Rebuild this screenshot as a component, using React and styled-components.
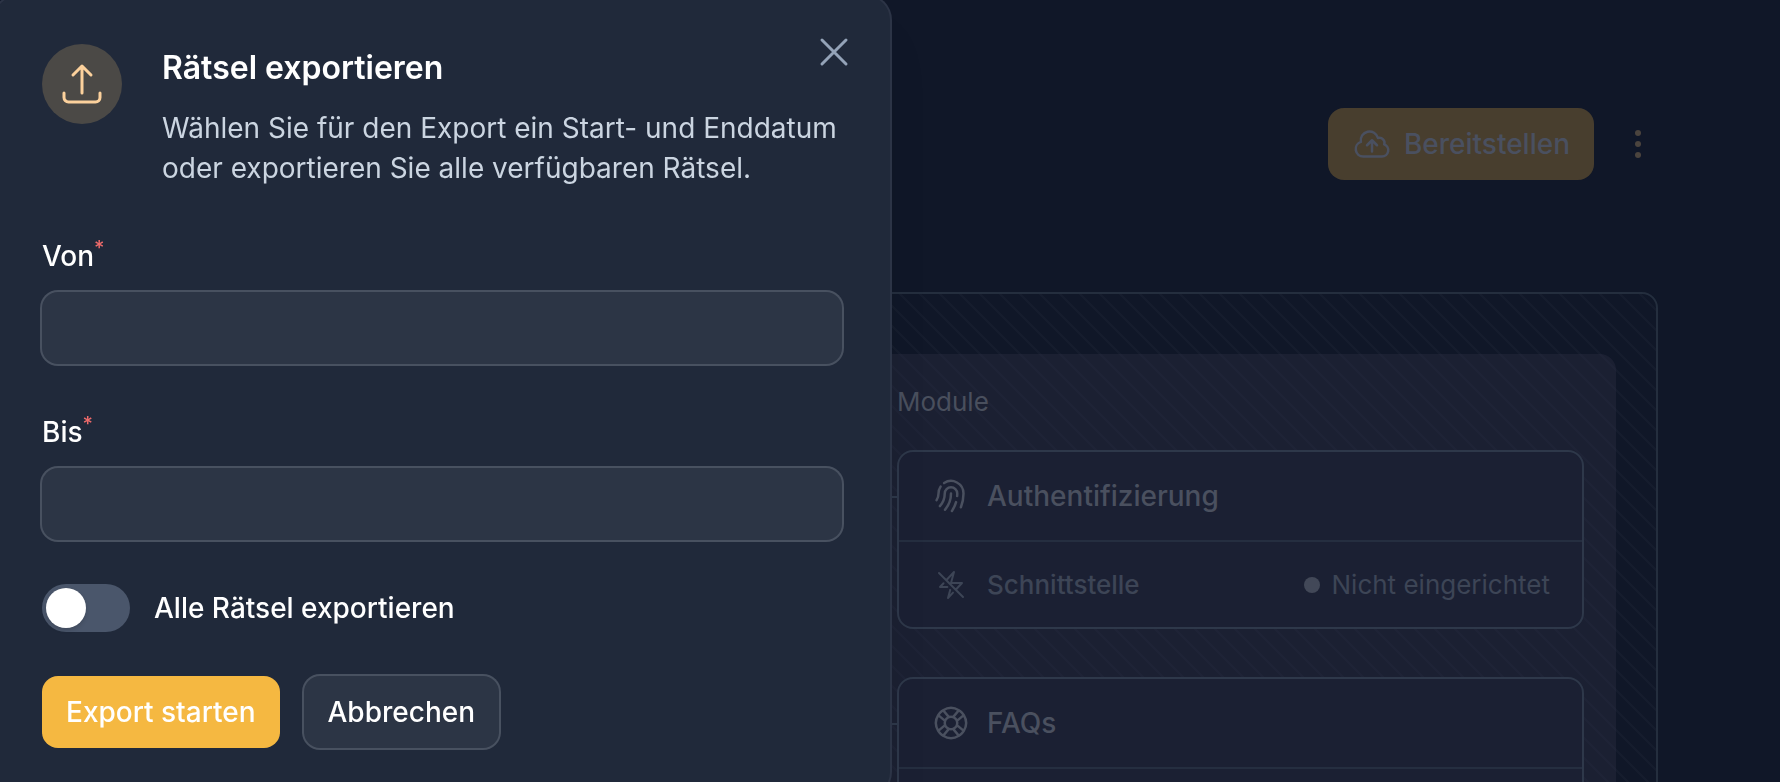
import React, { useState } from "react";
import styled, { createGlobalStyle } from "styled-components";
import {
  HiOutlineArrowUpTray,
  HiOutlineBoltSlash,
  HiOutlineCloudArrowUp,
  HiOutlineFingerPrint,
  HiOutlineLifebuoy,
  HiOutlineXMark,
} from "react-icons/hi2";

const GlobalStyle = createGlobalStyle`
  * {
    box-sizing: border-box;
  }

  body {
    margin: 0;
    overflow: hidden;
    background-color: #101728;
    color: #fff;
    font-family: Inter, "Liberation Sans", sans-serif;
    font-size: 28px;
    line-height: 40px;
    -webkit-font-smoothing: antialiased;
  }

  button, input {
    font: inherit;
    color: inherit;
    border: none;
    padding: 0;
  }

  button {
    cursor: pointer;
  }
`;

/* page */

const Page = styled.div`
  height: 100vh;
  overflow: hidden;
`;

const Container = styled.div`
  max-width: 1536px;
  margin: 0 auto;
  padding-top: 108px;
`;

const Header = styled.header`
  display: flex;
  align-items: center;
  justify-content: flex-end;
  gap: 24px;
  margin-bottom: 112px;
`;

const DeployButton = styled.button`
  display: flex;
  align-items: center;
  gap: 12px;
  padding: 16px 24px;
  border-radius: 16px;
  background-color: #483e2e;
  color: #4a5060;
  font-weight: 500;
`;

const MenuButton = styled.button`
  display: flex;
  background: none;
  color: #4b443e;
`;

const Canvas = styled.main`
  padding: 60px 40px;
  border: 2px solid #242e3e;
  border-radius: 16px;
  background-image: linear-gradient(
    45deg,
    #151c2d 4%,
    transparent 4%,
    transparent 46%,
    #151c2d 46%,
    #151c2d 54%,
    transparent 54%,
    transparent 96%,
    #151c2d 96%
  );
  background-size: 20px 20px;
  background-position: 16px 0;
`;

const Board = styled.div`
  display: grid;
  grid-template-columns: 1fr 1fr;
  column-gap: 14px;
  padding: 24px 32px;
  border-radius: 16px;
  background-color: rgba(53, 54, 77, 0.3);
`;

const ModuleColumn = styled.section`
  grid-column: 2;
  display: flex;
  flex-direction: column;
  gap: 48px;
`;

const ColumnTitle = styled.h2`
  margin: 4px 0 -20px;
  font-size: 26px;
  font-weight: 400;
  line-height: 40px;
  color: #494f5d;
`;

const ModuleCard = styled.article`
  position: relative;
  border: 2px solid #2e384a;
  border-radius: 16px;
  background-color: #1b2033;

  &::before {
    content: "";
    position: absolute;
    top: 44px;
    right: 100%;
    width: 16px;
    height: 2px;
    background-color: #2e384a;
  }
`;

const ModuleHeader = styled.div`
  display: flex;
  align-items: center;
  gap: 16px;
  padding: 24px 32px;
  border-bottom: 2px solid #252e40;
  color: #4a505f;
  font-weight: 500;
`;

const ModuleRow = styled.div`
  display: flex;
  align-items: center;
  gap: 16px;
  height: 85px;
  padding: 0 32px;
  color: #3d4556;
  font-size: 26px;
  font-weight: 500;
`;

const IconSlot = styled.span`
  display: flex;
  align-items: center;
  justify-content: center;
  width: 40px;
  height: 40px;
`;

const Status = styled.span`
  display: flex;
  align-items: center;
  gap: 12px;
  margin-left: auto;
  font-weight: 400;
`;

const StatusDot = styled.span`
  width: 16px;
  height: 16px;
  border-radius: 50%;
  background-color: #424858;
`;

/* dialog */

const DialogLayer = styled.div`
  position: fixed;
  inset: -4px 0 0 -6px;
`;

const Dialog = styled.form`
  position: relative;
  width: 100%;
  max-width: 896px;
  padding: 48px;
  border-radius: 24px;
  background-color: #20293a;
  box-shadow: 0 0 0 2px #2c3446, 0 40px 50px -10px rgba(0, 0, 0, 0.1);
`;

const CloseButton = styled.button`
  position: absolute;
  top: 32px;
  right: 32px;
  display: flex;
  background: none;
  color: #94a3b8;
`;

const Intro = styled.div`
  display: flex;
  gap: 40px;
  margin-bottom: 48px;
`;

const IntroIcon = styled.div`
  display: flex;
  align-items: center;
  justify-content: center;
  flex-shrink: 0;
  width: 80px;
  height: 80px;
  border-radius: 50%;
  background-color: #4b4946;
  color: #fcd19c;
`;

const Title = styled.h1`
  margin: 0 0 16px;
  font-size: 32px;
  font-weight: 600;
  line-height: 48px;
`;

const Description = styled.p`
  margin: 0;
  color: #cbd5e1;
`;

const Field = styled.div`
  margin-bottom: 48px;
`;

const Label = styled.label`
  display: flex;
  margin-bottom: 16px;
  font-weight: 500;
`;

const Required = styled.span`
  font-size: 20px;
  line-height: 24px;
  color: #ee6b6b;
`;

const TextInput = styled.input`
  display: block;
  width: 100%;
  height: 72px;
  padding: 0 24px;
  border-radius: 16px;
  background-color: #2c3545;
  box-shadow: 0 0 0 2px #485160;
  outline: none;
`;

const SwitchRow = styled.div`
  display: flex;
  align-items: center;
  gap: 24px;
  margin: -4px 0 44px;
  font-weight: 500;
`;

const Switch = styled.input`
  appearance: none;
  width: 88px;
  height: 48px;
  margin: 0;
  padding: 4px;
  border-radius: 24px;
  background-color: #4a566b;
  cursor: pointer;

  &::before {
    content: "";
    display: block;
    width: 40px;
    height: 40px;
    border-radius: 50%;
    background-color: #fff;
    box-shadow: 0 2px 4px rgba(0, 0, 0, 0.15);
  }

  &:checked {
    background-color: #f5b841;
  }

  &:checked::before {
    margin-left: 40px;
  }
`;

const Actions = styled.div`
  display: flex;
  gap: 24px;
`;

const Button = styled.button`
  padding: 16px 24px;
  border-radius: 16px;
  background-color: ${(props) => (props.$primary ? "#f5b841" : "#2c3545")};
  box-shadow: ${(props) => (props.$primary ? "none" : "0 0 0 2px #485160")};
  font-weight: 500;
`;

const modules = [
  {
    name: "Authentifizierung",
    Icon: HiOutlineFingerPrint,
    status: "Nicht eingerichtet",
  },
  { name: "FAQs", Icon: HiOutlineLifebuoy },
];

const DateField = ({ id, label }) => (
  <Field>
    <Label htmlFor={id}>
      {label}
      <Required>*</Required>
    </Label>
    <TextInput id={id} name={id} type="text" />
  </Field>
);

const Module = ({ name, Icon, status }) => (
  <ModuleCard>
    <ModuleHeader>
      <Icon size={40} />
      {name}
    </ModuleHeader>
    <ModuleRow>
      {status && (
        <>
          <IconSlot>
            <HiOutlineBoltSlash size={32} />
          </IconSlot>
          Schnittstelle
          <Status>
            <StatusDot />
            {status}
          </Status>
        </>
      )}
    </ModuleRow>
  </ModuleCard>
);

const ExportDialog = () => {
  const [exportAll, setExportAll] = useState(false);

  return (
    <DialogLayer>
      <Dialog
        role="dialog"
        aria-labelledby="export-title"
        onSubmit={(e) => e.preventDefault()}
      >
        <CloseButton type="button" aria-label="Schließen">
          <HiOutlineXMark size={48} />
        </CloseButton>
        <Intro>
          <IntroIcon>
            <HiOutlineArrowUpTray size={48} />
          </IntroIcon>
          <div>
            <Title id="export-title">Rätsel exportieren</Title>
            <Description>
              Wählen Sie für den Export ein Start- und Enddatum oder
              exportieren Sie alle verfügbaren Rätsel.
            </Description>
          </div>
        </Intro>
        <DateField id="from" label="Von" />
        <DateField id="to" label="Bis" />
        <SwitchRow>
          <Switch
            id="all"
            type="checkbox"
            role="switch"
            checked={exportAll}
            onChange={(e) => setExportAll(e.target.checked)}
          />
          <label htmlFor="all">Alle Rätsel exportieren</label>
        </SwitchRow>
        <Actions>
          <Button $primary type="submit">
            Export starten
          </Button>
          <Button type="button">Abbrechen</Button>
        </Actions>
      </Dialog>
    </DialogLayer>
  );
};

const App = () => (
  <>
    <GlobalStyle />
    <Page>
      <Container>
        <Header>
          <DeployButton type="button">
            <HiOutlineCloudArrowUp size={40} />
            Bereitstellen
          </DeployButton>
          <MenuButton type="button" aria-label="Mehr">
            <svg width="40" height="40" viewBox="0 0 20 20" fill="currentColor">
              <circle cx="10" cy="4.5" r="1.5" />
              <circle cx="10" cy="10" r="1.5" />
              <circle cx="10" cy="15.5" r="1.5" />
            </svg>
          </MenuButton>
        </Header>
        <Canvas>
          <Board>
            <ModuleColumn>
              <ColumnTitle>Module</ColumnTitle>
              {modules.map((module) => (
                <Module key={module.name} {...module} />
              ))}
            </ModuleColumn>
          </Board>
        </Canvas>
      </Container>
    </Page>
    <ExportDialog />
  </>
);

export default App;
